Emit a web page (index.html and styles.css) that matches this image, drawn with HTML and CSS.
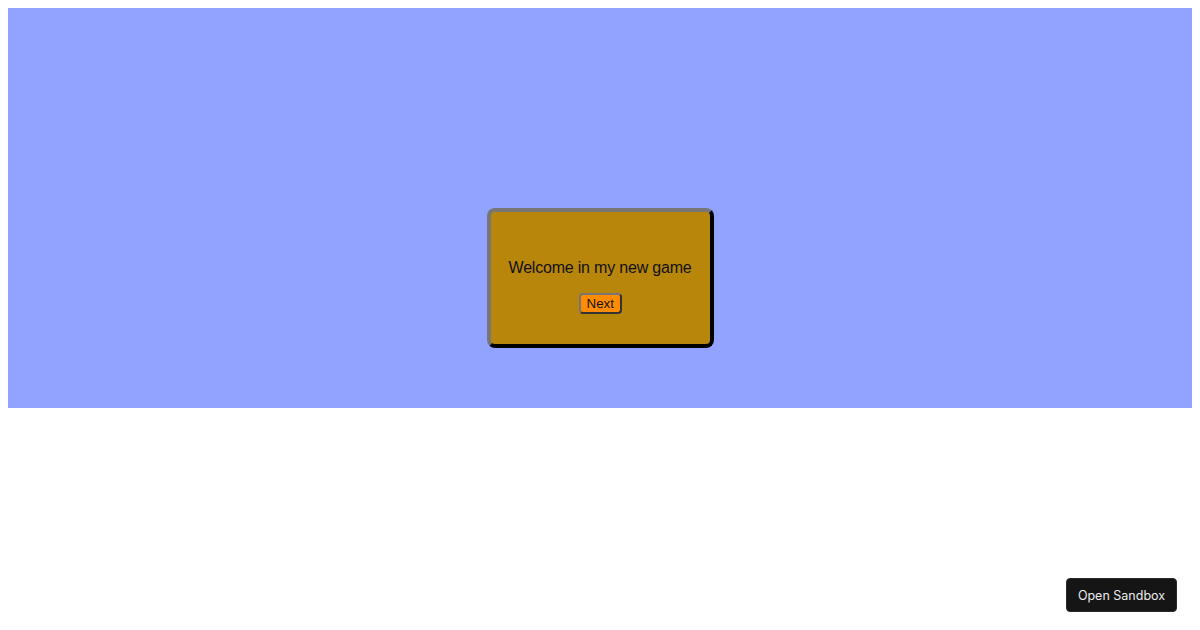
FILE: index.html
```html
<!DOCTYPE html>
<html>
<head>
<meta charset="utf-8">
<link rel="stylesheet" href="styles.css">
</head>
<body>
<div class="stage">
  <div class="dialog">
    <p class="message">Welcome in my new game</p>
    <button class="next">Next</button>
  </div>
</div>
<a class="sandbox">Open Sandbox</a>
</body>
</html>
```
FILE: styles.css
```css
body {
  margin: 8px;
  font-family: "Liberation Sans", Arial, sans-serif;
}
.stage {
  height: 400px;
  background: #91a3ff;
  display: flex;
  justify-content: center;
  align-items: flex-start;
  padding-top: 200px;
  box-sizing: border-box;
}
.dialog {
  width: 219px;
  padding: 30px 0 30px;
  background: #b8860b;
  border: 4px solid;
  border-color: #767676 #000 #000 #767676;
  border-radius: 8px;
  text-align: center;
}
.message {
  margin: 17px 0 16px;
  font-size: 16px;
  line-height: 18px;
  letter-spacing: -0.2px;
  color: #111;
}
.next {
  font-family: "Liberation Sans", Arial, sans-serif;
  font-size: 13.33px;
  background: #ff8c00;
  color: #111;
  border: 2px solid;
  border-color: #767676 #333 #333 #767676;
  border-radius: 4px;
  padding: 1px 6px;
  height: 21px;
  width: 43px;
  box-sizing: border-box;
  line-height: 15px;
}
.sandbox {
  position: fixed;
  right: 23px;
  bottom: 18px;
  width: 111px;
  height: 34px;
  box-sizing: border-box;
  background: #151515;
  color: #ececec;
  border-radius: 4px;
  font-family: Inter, "Noto Sans", sans-serif;
  font-size: 12.5px;
  display: flex;
  align-items: center;
  justify-content: center;
  border: 1px solid #2a2a2a;
}
```
